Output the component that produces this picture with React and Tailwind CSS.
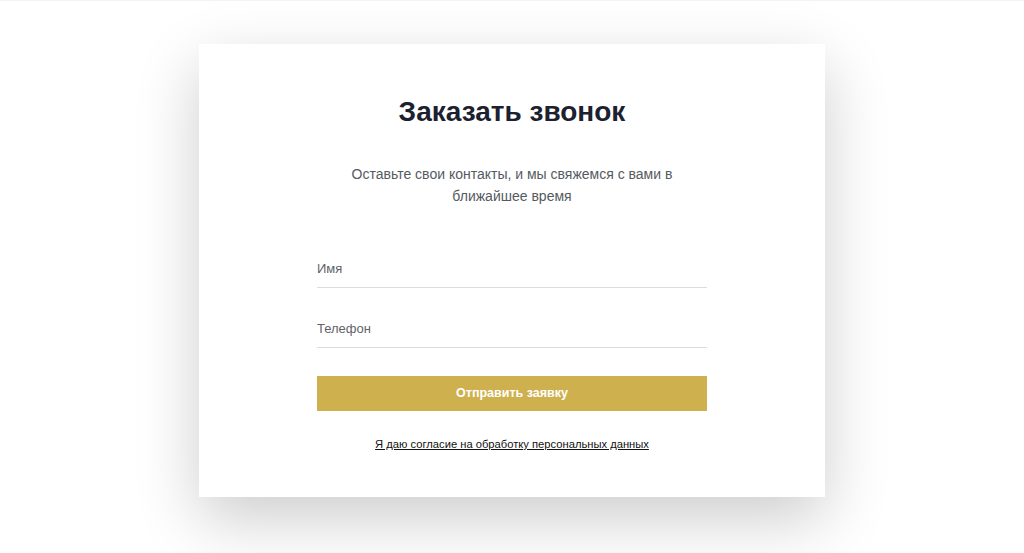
export default function App() {
  return (
    <div
      className="min-h-[553px] bg-white border-t border-[#f4f4f4] pt-[43px]"
      style={{ fontFamily: '"Liberation Sans", Arial, sans-serif' }}
    >
      <div className="w-[626px] mx-auto bg-white shadow-[0_22px_60px_rgba(0,0,0,0.2)] pt-[52px] pb-[46px]">
        <h1 className="text-center text-[28px] leading-[32px] font-bold text-[#1c2130]">
          Заказать звонок
        </h1>
        <p className="mt-[35px] mx-auto w-[340px] text-center text-[14px] leading-[22px] text-[#555a61]">
          Оставьте свои контакты, и мы свяжемся с вами в ближайшее время
        </p>

        <form className="w-[390px] mx-auto mt-[40px] flex flex-col">
          <input
            type="text"
            placeholder="Имя"
            className="w-full h-[41px] pt-[14px] pb-[11px] text-[13px] leading-[15px] text-[#333] placeholder:text-[#5f6368] border-b border-[#dcdcdc] outline-none bg-transparent"
          />
          <input
            type="tel"
            placeholder="Телефон"
            className="mt-[19px] w-full h-[41px] pt-[14px] pb-[11px] text-[13px] leading-[15px] text-[#333] placeholder:text-[#5f6368] border-b border-[#dcdcdc] outline-none bg-transparent"
          />
          <button
            type="button"
            className="mt-[28px] h-[35px] w-full bg-[#cfb04e] text-white text-[12.5px] font-bold"
          >
            Отправить заявку
          </button>
          <a
            href="#"
            className="mt-[26px] self-center text-[11.2px] leading-[14px] text-[#111] underline"
          >
            Я даю согласие на обработку персональных данных
          </a>
        </form>
      </div>
    </div>
  );
}
